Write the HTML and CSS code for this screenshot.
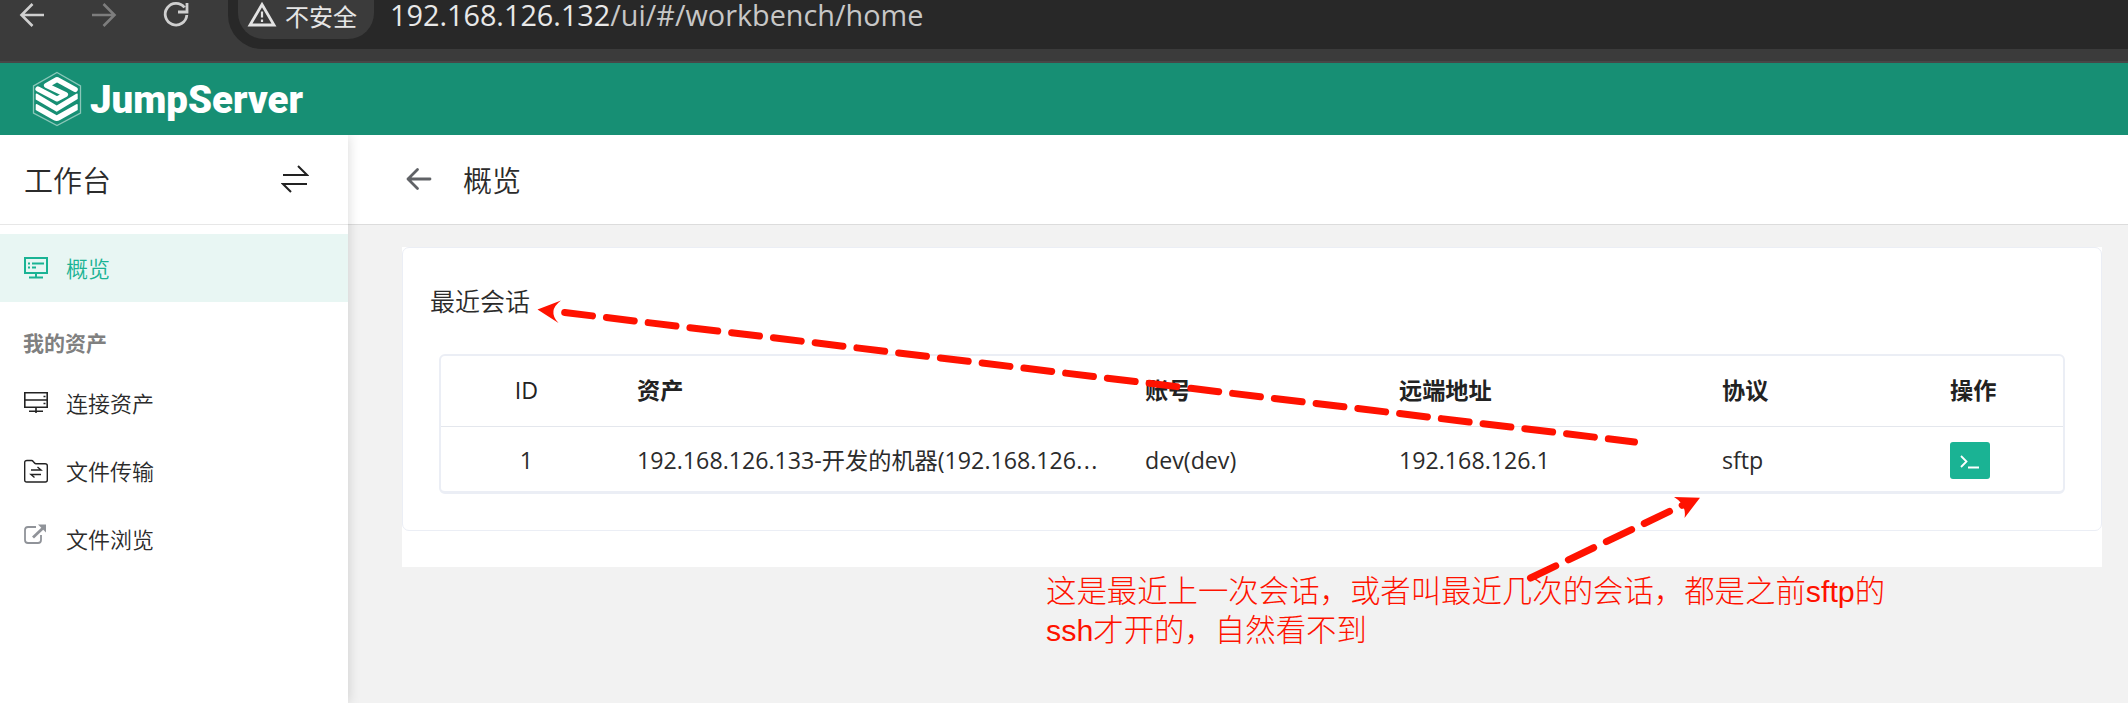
FILE: index.html
```html
<!DOCTYPE html>
<html lang="zh-CN">
<head>
<meta charset="utf-8">
<title>JumpServer</title>
<link rel="stylesheet" href="styles.css">
</head>
<body>
<div class="browser">
  <svg class="nav" width="200" height="40" viewBox="0 0 200 40" fill="none">
    <path d="M44 15H22M32.500 4L21.500 15l11 11" stroke="#cfcfcf" stroke-width="2.600"/>
    <path d="M92 15h22M103.500 4l11 11-11 11" stroke="#7d7d7d" stroke-width="2.600"/>
    <path d="M184.500 7.500A10.800 10.800 0 1 0 186.800 15M187 3v9h-9" stroke="#cfcfcf" stroke-width="2.800"/>
  </svg>
  <div class="address">
    <div class="chip">
      <svg width="30" height="28" viewBox="0 0 30 28" fill="none" stroke="#e3e3e3"><path d="M15 4.500L27 25H3z" stroke-width="2.800"/><path d="M15 11.500v6M15 19.500v2.500" stroke-width="2.200"/></svg>
      <span>不安全</span>
    </div>
    <div class="url"><b>192.168.126.132</b>/ui/#/workbench/home</div>
  </div>
</div>
<header class="brand">
  <svg width="280" height="56" viewBox="0 0 280 56">
    <path d="M25 1.500L48.500 15v27L25 54.500 1.500 42V15z" fill="none" stroke="#8bc7b9" stroke-width="1.300"/>
    <path d="M43.200 18.500L25 8.500 14.500 14.500 33.500 23.500 25 28 6 18" fill="none" stroke="#fff" stroke-width="5.200" stroke-linejoin="round" stroke-linecap="round"/>
    <path fill="#fff" d="M3.700 23.500q0-1.500 1.500-.7L24.700 34.500 44.300 22.800q1.400-.8 1.400.7V28L24.700 40.700 3.700 28.500zM3.700 34q0-1.500 1.500-.7L24.700 44.300 44.300 33.300q1.400-.8 1.400.7v5L28 49q-3.300 2-6.600 0L3.700 39z"/>
    <text class="logo-text" x="58" y="42" textLength="213" lengthAdjust="spacingAndGlyphs">JumpServer</text>
  </svg>
</header>
<div class="body">
  <aside class="side">
    <div class="side-head"><span>工作台</span>
      <svg width="28" height="28" viewBox="0 0 28 28" fill="none" stroke="#222" stroke-width="2"><path d="M2 10h24L17 1M26 19H2l8 8"/></svg>
    </div>
    <nav>
      <a class="item active"><svg width="24" height="22" viewBox="0 0 24 22" fill="none" stroke="#1ab394" stroke-width="2"><path d="M1 1h22v15H1zM12 16v4M5 20.500h14M4 6.500h2M8 6.500h12M4 10.500h2M8 10.500h4"/></svg><span>概览</span></a>
      <div class="group">我的资产</div>
      <a class="item"><svg width="24" height="22" viewBox="0 0 24 22" fill="none" stroke="#222" stroke-width="1.600"><path d="M.8.800h22.400v14.400H.8zM.8 8h22.400M12 15v6M5 19.300h14M19.500 4.500h2M19.500 11.500h2"/></svg><span>连接资产</span></a>
      <a class="item"><svg width="24" height="24" viewBox="0 0 24 24" fill="none" stroke="#222" stroke-width="1.400"><path d="M3 1.500h4.500q1 0 1.700 1l1.300 1.500q.6.700 1.500.7H21q2.300 0 2.300 2V21q0 2-2 2H2.700q-2 0-2-2V3.500q0-2 2.300-2zM7 11h10l-3.500-3M17 15.500H7l3.500 3"/></svg><span>文件传输</span></a>
      <a class="item"><svg class="ext" width="24" height="22" viewBox="0 0 24 22" fill="none" stroke="#909399" stroke-width="1.800"><path d="M12 3H4Q1 3 1 6v10q0 3 3 3h10q3 0 3-3v-5"/><path d="M9 13.500L19 4" stroke-width="2.800"/><path d="M14 .5h8v8z" fill="#909399" stroke="none"/></svg><span>文件浏览</span></a>
    </nav>
  </aside>
  <main>
    <div class="title">
      <svg width="26" height="24" viewBox="0 0 26 24" fill="none" stroke="#606266" stroke-width="2.800" stroke-linecap="round" stroke-linejoin="round"><path d="M24 12H2M11.500 2.500L2 12l9.500 9.500"/></svg>
      <span>概览</span>
    </div>
    <section class="panel">
      <div class="card">
        <h2>最近会话</h2>
        <div class="table">
          <div class="row th"><span class="id">ID</span><span>资产</span><span>账号</span><span>远端地址</span><span>协议</span><span>操作</span></div>
          <div class="row"><span class="id">1</span><span>192.168.126.133-开发的机器(192.168.126<i>...</i></span><span>dev(dev)</span><span>192.168.126.1</span><span>sftp</span><span><button><svg width="22" height="16" viewBox="0 0 22 16" fill="none" stroke="#fff" stroke-width="1.800"><path d="M2 2l5.500 5.500L2 13M9 13.500h11"/></svg></button></span></div>
        </div>
      </div>
    </section>
  </main>
</div>
<svg class="marks" width="2128" height="703" viewBox="0 0 2128 703">
  <g fill="none" stroke="#ff1200" stroke-width="7" stroke-linecap="round" stroke-dasharray="28 14.050">
    <path d="M564.700 312.500L1634.500 442"/><path d="M1530.500 578L1685 504"/>
  </g>
  <g fill="#ff1200"><path d="M537.500 309.500L561 300.500Q547 311 558.500 323z"/><path d="M1700 497.700L1674 497Q1687 505 1684.500 518z"/></g>
</svg>
<div class="note">这是最近上一次会话，或者叫最近几次的会话，都是之前sftp的<br>ssh才开的，自然看不到</div>
</body>
</html>
```
FILE: styles.css
```css
* { box-sizing: border-box; }
body { margin: 0; width: 2128px; height: 703px; overflow: hidden; position: relative; background: #f2f2f2; color: #2b2b2b; font-family: "Open Sans", "Noto Sans CJK SC", sans-serif; display: flex; flex-direction: column; }
.browser { height: 63px; background: #3b3b3b; border-bottom: 2px solid #474747; display: flex; flex: none; }
.nav { margin-right: 28px; flex: none; }
.address { flex: 1; height: 49px; background: #282828; border-bottom-left-radius: 34px; display: flex; color: #c7c7c7; }
.chip { margin-left: 10px; width: 136px; height: 39px; background: #3b3b3b; border-radius: 0 0 26px 26px; padding-left: 9px; display: flex; color: #e6e6e6; font: 24px/32px "Noto Sans CJK SC", sans-serif; gap: 8px; }
.url { margin-left: 16px; font-size: 28.800px; line-height: 29px; white-space: nowrap; }
.url b { font-weight: 400; color: #e8e8e8; }
.brand { height: 72px; flex: none; background: #178f74; padding: 8px 0 0 32px; }
.logo-text { font: 900 38.500px Roboto, sans-serif; fill: #fff; }
.body { flex: 1; display: flex; min-height: 0; }
.side { width: 348px; background: #fff; box-shadow: 0 0 12px rgba(0,0,0,.16); z-index: 1; clip-path: inset(0 -20px 0 0); }
.side-head { height: 90px; border-bottom: 1px solid #e7e7e7; display: flex; justify-content: space-between; padding: 0 39px 0 24px; font-size: 29px; line-height: 92px; font-weight: 350; }
.side-head svg { margin-top: 30px; }
nav { padding-top: 9px; }
.item { height: 68px; display: flex; align-items: center; padding-left: 24px; gap: 18px; font-size: 22px; font-weight: 350; }
.item span { margin-top: -2px; }
.active { background: #e8f6f3; color: #1ab394; }
.group { height: 67px; padding: 8px 0 0 23px; line-height: 67px; font-size: 21px; font-weight: 700; color: #808080; }
.ext { margin-top: -8px; }
main { flex: 1; }
.title { height: 90px; background: #fff; border-bottom: 1px solid #dcdcdc; display: flex; padding-left: 58px; font-size: 29px; line-height: 92px; font-weight: 350; gap: 31px; }
.title svg { margin-top: 32px; }
.panel { margin: 22px 26px 0 54px; height: 320px; background: #fff; }
.card { height: 284px; border: 1px solid #ebeef5; border-radius: 7px; padding: 33px 36px 0 27px; }
h2 { margin: 0 0 33px; font-size: 25px; line-height: 40px; font-weight: 350; }
.table { margin-left: 9px; height: 140px; border: 2px solid #ebeef5; border-bottom-width: 3px; border-radius: 6px; }
.row { display: grid; grid-template-columns: 172px 508px 254px 323px 228px 1fr; padding-left: 24px; font-size: 23.200px; font-weight: 370; line-height: 66px; height: 65px; }
.row .id { width: 123px; text-align: center; }
.row i { font-style: normal; letter-spacing: 1.500px; }
.th { height: 71px; border-bottom: 1px solid #e4e7ed; font-weight: 700; line-height: 69px; color: #222; }
.th .id { font-weight: 500; }
button { display: flex; align-items: center; justify-content: center; width: 40px; height: 37px; margin-top: 15px; padding: 3px 0 0; border: 0; border-radius: 3px; background: #1ab394; }
.marks { position: absolute; left: 0; top: 0; z-index: 2; }
.note { position: absolute; z-index: 3; left: 1046px; top: 572px; color: #ff1200; font: 300 30.400px/38.700px "Liberation Sans", "Noto Sans CJK SC", sans-serif; white-space: nowrap; }
```
